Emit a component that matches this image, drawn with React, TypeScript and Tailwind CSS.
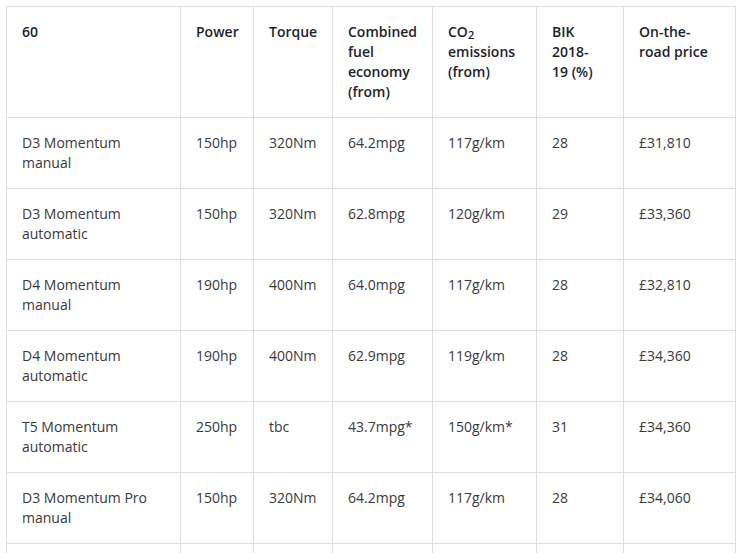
const widths = ["w-[174px]", "w-[73px]", "w-[79px]", "w-[100px]", "w-[104px]", "w-[87px]", "w-[112px]"]

const headers = [
  <>60</>,
  <>Power</>,
  <>Torque</>,
  <>Combined fuel economy (from)</>,
  <>
    CO<sub className="relative top-[2px] align-baseline text-[11px]">2</sub> emissions (from)
  </>,
  <>
    BIK 2018-
    <br />
    19 (%)
  </>,
  <>
    On-the-
    <br />
    road price
  </>,
]

const rows = [
  ["D3 Momentum manual", "150hp", "320Nm", "64.2mpg", "117g/km", "28", "£31,810"],
  ["D3 Momentum automatic", "150hp", "320Nm", "62.8mpg", "120g/km", "29", "£33,360"],
  ["D4 Momentum manual", "190hp", "400Nm", "64.0mpg", "117g/km", "28", "£32,810"],
  ["D4 Momentum automatic", "190hp", "400Nm", "62.9mpg", "119g/km", "28", "£34,360"],
  ["T5 Momentum automatic", "250hp", "tbc", "43.7mpg*", "150g/km*", "31", "£34,360"],
  ["D3 Momentum Pro manual", "150hp", "320Nm", "64.2mpg", "117g/km", "28", "£34,060"],
  ["", "", "", "", "", "", ""],
]

export default function App() {
  return (
    <div className="h-[553px] overflow-hidden bg-white pl-[6px] pt-[6px] font-['Open_Sans',sans-serif]">
      <table className="w-[730px] table-fixed border-collapse text-[14px] leading-[20px]">
        <thead>
          <tr>
            {headers.map((h, i) => (
              <th
                key={i}
                className={`${widths[i]} border border-[#dedede] px-[15px] py-[15px] text-left align-top font-semibold text-[#1e1e2d]`}
              >
                {h}
              </th>
            ))}
          </tr>
        </thead>
        <tbody>
          {rows.map((r, ri) => (
            <tr key={ri}>
              {r.map((c, ci) => (
                <td
                  key={ci}
                  className="h-[71px] border border-[#dedede] px-[15px] py-[15px] align-top text-[#3a3a3a]"
                >
                  {c}
                </td>
              ))}
            </tr>
          ))}
        </tbody>
      </table>
    </div>
  )
}
